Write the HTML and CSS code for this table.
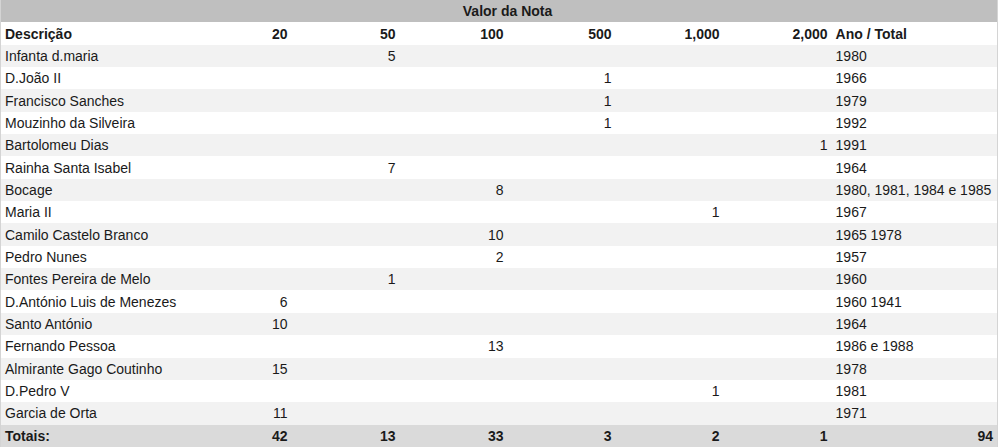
FILE: index.html
```html
<!DOCTYPE html>
<html lang="pt">
<head>
<meta charset="utf-8">
<title>Valor da Nota</title>
<link rel="stylesheet" href="styles.css">
</head>
<body>
<table class="notes">
  <colgroup>
    <col class="c-desc">
    <col class="c-num"><col class="c-num"><col class="c-num">
    <col class="c-num"><col class="c-num"><col class="c-num">
    <col class="c-ano">
  </colgroup>
  <thead>
    <tr class="group">
      <th></th>
      <th colspan="6" class="center">Valor da Nota</th>
      <th></th>
    </tr>
    <tr class="heads">
      <th class="left">Descrição</th>
      <th class="num">20</th>
      <th class="num">50</th>
      <th class="num">100</th>
      <th class="num">500</th>
      <th class="num">1,000</th>
      <th class="num">2,000</th>
      <th class="left">Ano / Total</th>
    </tr>
  </thead>
  <tbody>
    <tr><td>Infanta d.maria</td><td class="num"></td><td class="num">5</td><td class="num"></td><td class="num"></td><td class="num"></td><td class="num"></td><td>1980</td></tr>
    <tr><td>D.João II</td><td class="num"></td><td class="num"></td><td class="num"></td><td class="num">1</td><td class="num"></td><td class="num"></td><td>1966</td></tr>
    <tr><td>Francisco Sanches</td><td class="num"></td><td class="num"></td><td class="num"></td><td class="num">1</td><td class="num"></td><td class="num"></td><td>1979</td></tr>
    <tr><td>Mouzinho da Silveira</td><td class="num"></td><td class="num"></td><td class="num"></td><td class="num">1</td><td class="num"></td><td class="num"></td><td>1992</td></tr>
    <tr><td>Bartolomeu Dias</td><td class="num"></td><td class="num"></td><td class="num"></td><td class="num"></td><td class="num"></td><td class="num">1</td><td>1991</td></tr>
    <tr><td>Rainha Santa Isabel</td><td class="num"></td><td class="num">7</td><td class="num"></td><td class="num"></td><td class="num"></td><td class="num"></td><td>1964</td></tr>
    <tr><td>Bocage</td><td class="num"></td><td class="num"></td><td class="num">8</td><td class="num"></td><td class="num"></td><td class="num"></td><td>1980, 1981, 1984 e 1985</td></tr>
    <tr><td>Maria II</td><td class="num"></td><td class="num"></td><td class="num"></td><td class="num"></td><td class="num">1</td><td class="num"></td><td>1967</td></tr>
    <tr><td>Camilo Castelo Branco</td><td class="num"></td><td class="num"></td><td class="num">10</td><td class="num"></td><td class="num"></td><td class="num"></td><td>1965 1978</td></tr>
    <tr><td>Pedro Nunes</td><td class="num"></td><td class="num"></td><td class="num">2</td><td class="num"></td><td class="num"></td><td class="num"></td><td>1957</td></tr>
    <tr><td>Fontes Pereira de Melo</td><td class="num"></td><td class="num">1</td><td class="num"></td><td class="num"></td><td class="num"></td><td class="num"></td><td>1960</td></tr>
    <tr><td>D.António Luis de Menezes</td><td class="num">6</td><td class="num"></td><td class="num"></td><td class="num"></td><td class="num"></td><td class="num"></td><td>1960 1941</td></tr>
    <tr><td>Santo António</td><td class="num">10</td><td class="num"></td><td class="num"></td><td class="num"></td><td class="num"></td><td class="num"></td><td>1964</td></tr>
    <tr><td>Fernando Pessoa</td><td class="num"></td><td class="num"></td><td class="num">13</td><td class="num"></td><td class="num"></td><td class="num"></td><td>1986 e 1988</td></tr>
    <tr><td>Almirante Gago Coutinho</td><td class="num">15</td><td class="num"></td><td class="num"></td><td class="num"></td><td class="num"></td><td class="num"></td><td>1978</td></tr>
    <tr><td>D.Pedro V</td><td class="num"></td><td class="num"></td><td class="num"></td><td class="num"></td><td class="num">1</td><td class="num"></td><td>1981</td></tr>
    <tr><td>Garcia de Orta</td><td class="num">11</td><td class="num"></td><td class="num"></td><td class="num"></td><td class="num"></td><td class="num"></td><td>1971</td></tr>
  </tbody>
  <tfoot>
    <tr class="totals">
      <th class="left">Totais:</th>
      <th class="num">42</th>
      <th class="num">13</th>
      <th class="num">33</th>
      <th class="num">3</th>
      <th class="num">2</th>
      <th class="num">1</th>
      <th class="num">94</th>
    </tr>
  </tfoot>
</table>
</body>
</html>
```

FILE: styles.css
```css
html, body {
  margin: 0;
  padding: 0;
  background: #ffffff;
}

.notes {
  width: 998px;
  table-layout: fixed;
  border-collapse: collapse;
  font-family: "Liberation Sans", Arial, sans-serif;
  font-size: 14px;
  color: #1a1a1a;
  border-left: 1px solid #d4d4d4;
  border-right: 1px solid #d4d4d4;
}

.c-desc { width: 183px; }
.c-num { width: 108px; }
.c-ano { width: auto; }

.notes th,
.notes td {
  height: 22.35px;
  padding: 0 4px 0 4px;
  box-sizing: border-box;
  white-space: nowrap;
  vertical-align: middle;
  line-height: 16px;
}

.notes th { font-weight: bold; }

.left { text-align: left; }
.center { text-align: center; }
.num { text-align: right; }

.notes td { text-align: left; }
.notes td.num { text-align: right; }

.group th { background: #bfbfbf; }

.heads th { background: #ffffff; }

.notes tbody tr:nth-child(odd) td { background: #f2f2f2; }
.notes tbody tr:nth-child(even) td { background: #ffffff; }

.totals th { background: #dadada; }
```
